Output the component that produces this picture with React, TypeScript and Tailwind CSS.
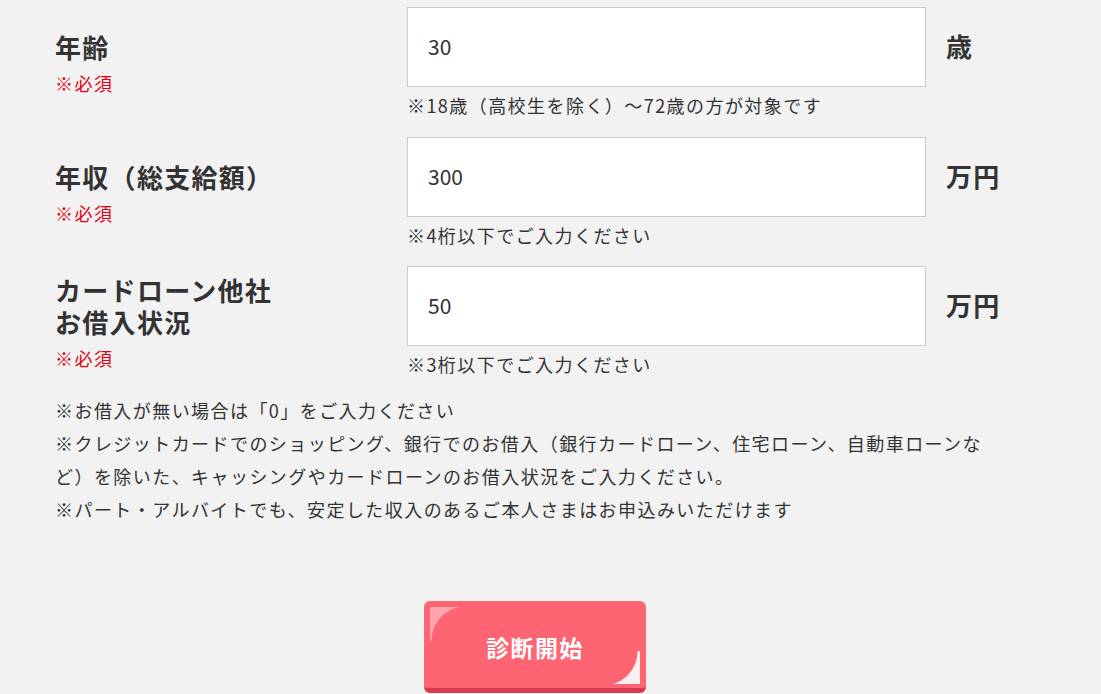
import React from 'react';

type Row = {
  label: string[];
  labelPad: string;
  value: string;
  unit: string;
  note: string;
};

const rows: Row[] = [
  {
    label: ['年齢'],
    labelPad: 'pt-[24px]',
    value: '30',
    unit: '歳',
    note: '※18歳（高校生を除く）～72歳の方が対象です',
  },
  {
    label: ['年収（総支給額）'],
    labelPad: 'pt-[24px]',
    value: '300',
    unit: '万円',
    note: '※4桁以下でご入力ください',
  },
  {
    label: ['カードローン他社', 'お借入状況'],
    labelPad: 'pt-[8px]',
    value: '50',
    unit: '万円',
    note: '※3桁以下でご入力ください',
  },
];

export default function App() {
  return (
    <div
      className="min-h-screen bg-[#f2f2f2] text-[#333] tracking-[0.09em] overflow-hidden"
      style={{ fontFamily: '"Noto Sans CJK JP", "Noto Sans", sans-serif' }}
    >
      <div className="ml-[55px] w-[960px] pt-[7px]">
        {/* form rows */}
        <div className="flex flex-col gap-[16.5px]">
          {rows.map((r) => (
            <div key={r.value} className="flex">
              <div className={`w-[352px] shrink-0 ${r.labelPad}`}>
                <div className="text-[26px] font-bold leading-[32px] tracking-[0.05em]">
                  {r.label.map((l) => (
                    <div key={l}>{l}</div>
                  ))}
                </div>
                <div className="mt-1 text-[18px] leading-[32px] text-[#e60012]">※必須</div>
              </div>
              <div className="w-[519px] shrink-0">
                <div className="flex h-[80px] items-center border border-[#cccccc] bg-white pl-5 text-[21px] tracking-[0em]">
                  {r.value}
                </div>
                <p className="mt-[3px] text-[18px] leading-[30px] tracking-[0.08em]">{r.note}</p>
              </div>
              <div className="flex h-[80px] items-center pb-[3px] pl-5 text-[26px] font-bold tracking-[0.05em]">
                {r.unit}
              </div>
            </div>
          ))}
        </div>

        {/* notes */}
        <div className="mt-[15px] w-[946px] text-[18px] leading-[33px]">
          <p>※お借入が無い場合は「0」をご入力ください</p>
          <p>
            ※クレジットカードでのショッピング、銀行でのお借入（銀行カードローン、住宅ローン、自動車ローンなど）を除いた、キャッシングやカードローンのお借入状況をご入力ください。
          </p>
          <p>※パート・アルバイトでも、安定した収入のあるご本人さまはお申込みいただけます</p>
        </div>

        {/* submit */}
        <div className="mt-[75px] flex w-[960px] justify-center">
          <button className="relative flex h-[92px] w-[222px] items-center justify-center overflow-hidden rounded-[6px] border-b-[5px] border-[#d93a4b] bg-[#ff6472] pt-[5px] text-[23px] font-bold tracking-[0.06em] text-white">
            <span className="absolute left-[6px] top-[6px] h-[34px] w-[36px] bg-[radial-gradient(circle_at_100%_100%,transparent_34px,#ffa3ac_35px)]" />
            <span className="absolute bottom-[4px] right-[6px] h-[33px] w-[37px] bg-[radial-gradient(circle_at_0%_0%,transparent_34px,#ffeef0_35px)]" />
            <span className="relative">診断開始</span>
          </button>
        </div>
      </div>
    </div>
  );
}
